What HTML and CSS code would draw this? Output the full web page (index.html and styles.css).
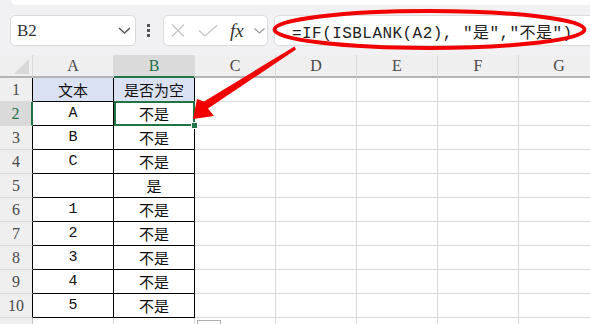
FILE: index.html
```html
<!DOCTYPE html>
<html lang="zh-CN">
<head>
    <meta charset="UTF-8">
    <title>ISBLANK 示例</title>
    <link rel="stylesheet" href="styles.css">
</head>
<body>
    <div class="topstrip"></div>

    <!-- 名称框 + 编辑栏 -->
    <div class="toolbar">
        <div class="namebox">
            <span class="ref">B2</span>
            <svg class="chev" width="13" height="7" viewBox="0 0 13 7"><path d="M1 1 L6.5 6 L12 1" fill="none" stroke="#555" stroke-width="1.4"/></svg>
        </div>
        <div class="grip"><i></i><i></i><i></i></div>
        <div class="fxbox">
            <svg class="ico-x" width="14" height="13" viewBox="0 0 14 13"><path d="M1 0.5 L13 12.5 M13 0.5 L1 12.5" stroke="#c4c4c4" stroke-width="1.3"/></svg>
            <svg class="ico-ok" width="20" height="12" viewBox="0 0 20 12"><path d="M1 5.5 L7 11 L19 0.5" fill="none" stroke="#c4c4c4" stroke-width="1.3"/></svg>
            <span class="fx">fx</span>
            <svg class="ico-dd" width="11" height="6" viewBox="0 0 11 6"><path d="M0.5 0.5 L5.5 5 L10.5 0.5" fill="none" stroke="#9a9a9a" stroke-width="1.2"/></svg>
        </div>
        <div class="formula">=IF(ISBLANK(A2), "是","不是")</div>
    </div>

    <!-- 工作表 -->
    <div class="sheet">
        <div class="corner"><i></i></div>
        <div class="ch">A</div>
        <div class="ch on">B</div>
        <div class="ch">C</div>
        <div class="ch">D</div>
        <div class="ch">E</div>
        <div class="ch">F</div>
        <div class="ch">G</div>

        <div class="rh t">1</div>
        <div class="c t head">文本</div>
        <div class="c t head">是否为空</div>
        <div class="c"></div><div class="c"></div><div class="c"></div><div class="c"></div><div class="c"></div>

        <div class="rh t on">2</div>
        <div class="c t">A</div>
        <div class="c t sel">不是</div>
        <div class="c"></div><div class="c"></div><div class="c"></div><div class="c"></div><div class="c"></div>

        <div class="rh t">3</div>
        <div class="c t">B</div>
        <div class="c t">不是</div>
        <div class="c"></div><div class="c"></div><div class="c"></div><div class="c"></div><div class="c"></div>

        <div class="rh t">4</div>
        <div class="c t">C</div>
        <div class="c t">不是</div>
        <div class="c"></div><div class="c"></div><div class="c"></div><div class="c"></div><div class="c"></div>

        <div class="rh t">5</div>
        <div class="c t"></div>
        <div class="c t">是</div>
        <div class="c"></div><div class="c"></div><div class="c"></div><div class="c"></div><div class="c"></div>

        <div class="rh t">6</div>
        <div class="c t">1</div>
        <div class="c t">不是</div>
        <div class="c"></div><div class="c"></div><div class="c"></div><div class="c"></div><div class="c"></div>

        <div class="rh t">7</div>
        <div class="c t">2</div>
        <div class="c t">不是</div>
        <div class="c"></div><div class="c"></div><div class="c"></div><div class="c"></div><div class="c"></div>

        <div class="rh t">8</div>
        <div class="c t">3</div>
        <div class="c t">不是</div>
        <div class="c"></div><div class="c"></div><div class="c"></div><div class="c"></div><div class="c"></div>

        <div class="rh t">9</div>
        <div class="c t">4</div>
        <div class="c t">不是</div>
        <div class="c"></div><div class="c"></div><div class="c"></div><div class="c"></div><div class="c"></div>

        <div class="rh t">10</div>
        <div class="c t">5</div>
        <div class="c t">不是</div>
        <div class="c"></div><div class="c"></div><div class="c"></div><div class="c"></div><div class="c"></div>

        <!-- 第 11 行只露出顶部 -->
        <div class="rh"></div>
        <div class="c"></div><div class="c"></div><div class="c"></div><div class="c"></div>
        <div class="c"></div><div class="c"></div><div class="c"></div>

        <div class="paste"></div>
    </div>

    <!-- 红色标注 -->
    <svg class="markup" width="590" height="324" viewBox="0 0 590 324">
        <ellipse cx="429.5" cy="29.5" rx="155" ry="18.5" fill="none" stroke="#f20000" stroke-width="4"/>
        <polygon fill="#f20000" points="294.5,46.5 204,101.5 197,99 193,119 214,116 208,108.5 296,49.5"/>
    </svg>
</body>
</html>
```

FILE: styles.css
```css
/* 表格截图样式 */
body {
    margin: 0;
    width: 590px;
    height: 324px;
    overflow: hidden;
    position: relative;
    background-color: #f1f1f3;
    font-family: 'Liberation Sans', 'Noto Sans CJK SC', sans-serif;
}
.topstrip {
    height: 5px;
    margin-left: 11px;
    background-color: #fff;
    border-bottom-left-radius: 6px;
}
.toolbar {
    display: flex;
    align-items: stretch;
    height: 31px;
    margin: 10px 0 9px 0;
    padding-left: 10px;
}
.namebox {
    width: 126px;
    box-sizing: border-box;
    display: flex;
    align-items: center;
    justify-content: space-between;
    padding: 0 4px 0 6px;
    background-color: #fff;
    border: 1px solid #d9d9d9;
    border-radius: 5px;
}
.ref {
    font: 17px 'Liberation Serif', serif;
    color: #333;
}
.grip {
    display: flex;
    flex-direction: column;
    justify-content: center;
    gap: 2px;
    margin-left: 11px;
}
.grip i {
    display: block;
    width: 3px;
    height: 3px;
    background-color: #555;
}
.fxbox {
    width: 105px;
    box-sizing: border-box;
    margin-left: 13px;
    display: flex;
    align-items: center;
    padding-left: 7px;
    background-color: #fff;
    border: 1px solid #dcdcdc;
    border-radius: 5px;
}
.ico-ok {
    margin-left: 13px;
}
.fx {
    margin-left: 12px;
    width: 17px;
    font: italic 19px 'Liberation Serif', serif;
    color: #333;
    line-height: 1;
}
.ico-dd {
    margin-left: 7px;
}
.formula {
    flex: 1;
    margin-left: 6px;
    margin-right: -20px;
    display: flex;
    align-items: center;
    padding-left: 17px;
    background-color: #fff;
    border: 1px solid #dcdcdc;
    border-radius: 5px;
    font: 16px 'Liberation Mono', 'Noto Sans CJK SC', monospace;
    letter-spacing: 0.45px;
    color: #222;
    white-space: pre;
}
.sheet {
    position: relative;
    display: grid;
    grid-template-columns: 33px repeat(7, 81px);
    grid-template-rows: 23px;
    grid-auto-rows: 24px;
    background-color: #fff;
}
.sheet > div {
    box-sizing: border-box;
    border-right: 1px solid #dadada;
    border-bottom: 1px solid #dadada;
    display: flex;
    align-items: center;
    justify-content: center;
}
.corner {
    background-color: #efefef;
    border-bottom: 2px solid #b4b4b4 !important;
    justify-content: flex-end !important;
    align-items: flex-end !important;
    padding: 0 3px 2px 0;
}
.corner i {
    width: 15px;
    height: 15px;
    background-color: #d8d8d8;
    clip-path: polygon(100% 0, 100% 100%, 0 100%);
}
.ch {
    background-color: #efefef;
    border-bottom: 2px solid #b4b4b4 !important;
    font: 16px 'Liberation Serif', serif;
    color: #4a4a4a;
}
.ch.on {
    background-color: #dadada;
    border-bottom-color: #217346 !important;
    color: #217346;
}
.rh {
    background-color: #efefef;
    border-right-color: #c4c4c4 !important;
    font: 16px 'Liberation Serif', serif;
    color: #4a4a4a;
}
.rh.t {
    border-right-color: #000 !important;
}
.rh.on {
    background-color: #dadada;
    border-right: 2px solid #217346 !important;
    color: #217346;
}
.c {
    font: 15px 'Liberation Mono', 'Noto Sans CJK SC', monospace;
    color: #111;
}
.c.t {
    border-right-color: #000;
    border-bottom-color: #000;
}
.c.head {
    background-color: #d9e1f2;
}
.sel {
    position: relative;
}
.sel::before {
    content: '';
    position: absolute;
    top: -1px;
    left: 0;
    right: -1px;
    bottom: -1px;
    border: 2px solid #217346;
}
.sel::after {
    content: '';
    position: absolute;
    right: -3px;
    bottom: -3px;
    width: 5px;
    height: 5px;
    background-color: #217346;
    box-shadow: 0 0 0 1px #fff;
    z-index: 2;
}
.sheet > .paste {
    position: absolute;
    left: 197px;
    top: 265px;
    width: 24px;
    height: 20px;
    border: 1px solid #b0b0b0;
    background-color: #fff;
}
.markup {
    position: absolute;
    top: 0;
    left: 0;
    pointer-events: none;
}
```
